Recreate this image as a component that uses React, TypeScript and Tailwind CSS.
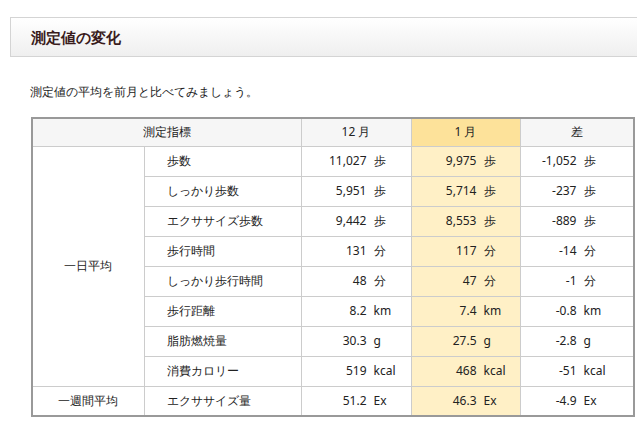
const rows: [string, string, string, string, string][] = [
  ["歩数", "11,027", "9,975", "-1,052", "歩"],
  ["しっかり歩数", "5,951", "5,714", "-237", "歩"],
  ["エクササイズ歩数", "9,442", "8,553", "-889", "歩"],
  ["歩行時間", "131", "117", "-14", "分"],
  ["しっかり歩行時間", "48", "47", "-1", "分"],
  ["歩行距離", "8.2", "7.4", "-0.8", "km"],
  ["脂肪燃焼量", "30.3", "27.5", "-2.8", "g"],
  ["消費カロリー", "519", "468", "-51", "kcal"],
]

function Val({ n, u, w }: { n: string; u: string; w: string }) {
  return (
    <div className="flex items-center">
      <span className={`${w} text-right`}>{n}</span>
      <span className="ml-[7px]">{u}</span>
    </div>
  )
}

const td = "border border-[#cccccc] h-[30px] p-0"

export default function App() {
  return (
    <div className="w-[637px] h-[424px] bg-white overflow-hidden text-[12px] text-[#222] font-['Noto_Sans_CJK_JP','Noto_Sans',sans-serif]">
      <div className="ml-[10px] mt-[17px] h-[40px] w-[640px] border border-[#d4d4d4] bg-gradient-to-b from-white to-[#efefef] flex items-center pl-[20px]">
        <h2 className="text-[15px] font-bold text-[#3a1c1c]">測定値の変化</h2>
      </div>
      <p className="ml-[30px] mt-[26px] text-[12px]">測定値の平均を前月と比べてみましょう。</p>
      <table className="ml-[31px] mt-[16px] border-collapse border-2 border-[#999999] table-fixed w-[602px]">
        <colgroup>
          <col className="w-[112px]" />
          <col className="w-[157px]" />
          <col className="w-[110px]" />
          <col className="w-[109px]" />
          <col className="w-[114px]" />
        </colgroup>
        <thead>
          <tr className="h-[28px]">
            <th colSpan={2} className="border border-[#cccccc] bg-[#f6f6f6] font-normal">測定指標</th>
            <th className="border border-[#cccccc] bg-[#f6f6f6] font-normal">12 月</th>
            <th className="border border-[#cccccc] bg-[#fde29a] font-normal">1 月</th>
            <th className="border border-[#cccccc] bg-[#f6f6f6] font-normal">差</th>
          </tr>
        </thead>
        <tbody>
          {rows.map((r, i) => (
            <tr key={r[0]}>
              {i === 0 && (
                <td rowSpan={8} className="border border-[#cccccc] text-center">一日平均</td>
              )}
              <td className={`${td} pl-[22px]`}>{r[0]}</td>
              <td className={td}><Val n={r[1]} u={r[4]} w="w-[65px]" /></td>
              <td className={`${td} bg-[#fff0c6]`}><Val n={r[2]} u={r[4]} w="w-[65px]" /></td>
              <td className={td}><Val n={r[3]} u={r[4]} w="w-[56px]" /></td>
            </tr>
          ))}
          <tr>
            <td className={`${td} text-center`}>一週間平均</td>
            <td className={`${td} pl-[22px]`}>エクササイズ量</td>
            <td className={td}><Val n="51.2" u="Ex" w="w-[65px]" /></td>
            <td className={`${td} bg-[#fff0c6]`}><Val n="46.3" u="Ex" w="w-[65px]" /></td>
            <td className={td}><Val n="-4.9" u="Ex" w="w-[56px]" /></td>
          </tr>
        </tbody>
      </table>
    </div>
  )
}
